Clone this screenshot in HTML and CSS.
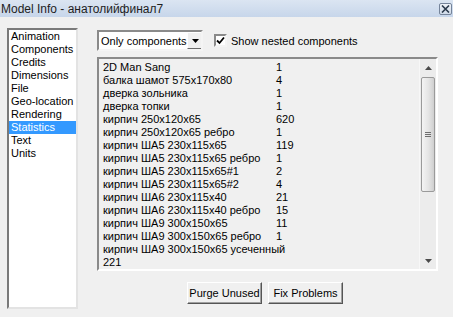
FILE: index.html
```html
<!DOCTYPE html>
<html lang="ru">
<head>
    <meta charset="UTF-8">
    <title>Model Info</title>
    <link rel="stylesheet" href="styles.css">
</head>
<body>
    <div class="titlebar">
        <span class="title">Model Info - анатолийфинал7</span>
        <span class="close-btn">
            <svg width="9" height="8" viewBox="0 0 9 8"><path d="M1 0.5 L8 7.5 M8 0.5 L1 7.5" stroke="#2b3a4d" stroke-width="1.6"/></svg>
        </span>
    </div>

    <div class="content">
        <ul class="nav">
            <li>Animation</li>
            <li>Components</li>
            <li>Credits</li>
            <li>Dimensions</li>
            <li>File</li>
            <li>Geo-location</li>
            <li>Rendering</li>
            <li class="selected">Statistics</li>
            <li>Text</li>
            <li>Units</li>
        </ul>

        <div class="main">
            <div class="toolbar">
                <div class="dropdown">
                    <span class="dropdown-text">Only components</span>
                    <span class="dropdown-arrow">
                        <svg width="7" height="4" viewBox="0 0 7 4"><path d="M0 0 H7 L3.5 4 Z" fill="#000"/></svg>
                    </span>
                </div>
                <label class="check">
                    <span class="check-box">
                        <svg width="9" height="9" viewBox="0 0 9 9"><path d="M1 4.5 L3.5 7 L8 1.5" stroke="#000" stroke-width="1.8" fill="none"/></svg>
                    </span>
                    Show nested components
                </label>
            </div>

            <div class="stats">
                <div class="rows">
                    <span>2D Man Sang</span><span>1</span>
                    <span>балка шамот 575x170x80</span><span>4</span>
                    <span>дверка зольника</span><span>1</span>
                    <span>дверка топки</span><span>1</span>
                    <span>кирпич 250x120x65</span><span>620</span>
                    <span>кирпич 250x120x65 ребро</span><span>1</span>
                    <span>кирпич ШA5 230x115x65</span><span>119</span>
                    <span>кирпич ШA5 230x115x65 ребро</span><span>1</span>
                    <span>кирпич ШA5 230x115x65#1</span><span>2</span>
                    <span>кирпич ШA5 230x115x65#2</span><span>4</span>
                    <span>кирпич ШA6 230x115x40</span><span>21</span>
                    <span>кирпич ШA6 230x115x40 ребро</span><span>15</span>
                    <span>кирпич ШA9 300x150x65</span><span>11</span>
                    <span>кирпич ШA9 300x150x65 ребро</span><span>1</span>
                    <span class="wide">кирпич ШA9 300x150x65 усеченный</span>
                    <span>221</span><span></span>
                </div>
                <div class="scrollbar">
                    <div class="sb-arrow">
                        <svg width="7" height="4" viewBox="0 0 7 4"><path d="M3.5 0 L7 4 H0 Z" fill="#4a4a4a"/></svg>
                    </div>
                    <div class="sb-thumb">
                        <span class="grip"></span>
                    </div>
                    <div class="sb-track"></div>
                    <div class="sb-arrow">
                        <svg width="7" height="4" viewBox="0 0 7 4"><path d="M0 0 H7 L3.5 4 Z" fill="#4a4a4a"/></svg>
                    </div>
                </div>
            </div>

            <div class="actions">
                <button class="btn">Purge Unused</button>
                <button class="btn">Fix Problems</button>
            </div>
        </div>
    </div>
</body>
</html>
```
FILE: styles.css
```css
body {
    margin: 0;
    background: #f0f0f0;
    font-family: "Liberation Sans", Arial, sans-serif;
    font-size: 11px;
    color: #000;
    width: 453px;
    height: 317px;
    overflow: hidden;
}

/* window title */
.titlebar {
    height: 17px;
    background: linear-gradient(to bottom, #dbe5f2, #c7d6ea);
    display: flex;
    align-items: center;
    justify-content: space-between;
}
.title { font-size: 12px; color: #1e1e1e; padding-left: 1px; }
.close-btn {
    width: 11px; height: 10px;
    margin-right: 1px;
    border: 1px solid #75849a;
    border-radius: 2px;
    background: linear-gradient(to bottom, #eef2f8, #d0dbe9);
    display: flex;
    align-items: center;
    justify-content: center;
}

.content {
    display: flex;
    padding: 11px 0 0 7px;
}

/* left list */
.nav {
    list-style: none;
    margin: 0;
    padding: 0;
    width: 67px;
    height: 277px;
    background: #fff;
    border: 2px solid;
    border-color: #7a7a7a #e3e3e3 #e3e3e3 #7a7a7a;
}
.nav li {
    line-height: 13px;
    height: 13px;
    padding-left: 2px;
    white-space: nowrap;
}
.nav li.selected { background: #3399ff; color: #fff; }

.main { margin-left: 19px; width: 341px; padding-top: 2px; }

.toolbar { display: flex; align-items: center; height: 21px; }
.dropdown {
    width: 102px; height: 17px;
    background: #fff;
    border: 2px solid;
    border-color: #8a8a8a #f4f4f4 #f4f4f4 #8a8a8a;
    display: flex;
    align-items: center;
    justify-content: space-between;
    white-space: nowrap;
    overflow: hidden;
}
.dropdown-text { padding-left: 2px; }
.dropdown-arrow {
    flex: none;
    width: 15px; height: 15px;
    background: #f0f0f0;
    border: 1px solid;
    border-color: #fff #6a6a6a #6a6a6a #fff;
    display: flex;
    align-items: center;
    justify-content: center;
}
.check { display: flex; align-items: center; margin-left: 11px; white-space: nowrap; }
.check-box {
    width: 9px; height: 9px;
    background: #fff;
    border: 2px solid;
    border-color: #8a8a8a #f4f4f4 #f4f4f4 #8a8a8a;
    margin-right: 4px;
    display: flex;
    align-items: center;
    justify-content: center;
}

/* statistics box */
.stats {
    margin-top: 6px;
    height: 210px;
    border: 2px solid;
    border-color: #8a8a8a #fff #fff #8a8a8a;
    display: flex;
}
.rows {
    flex: 1;
    display: grid;
    grid-template-columns: 173px 1fr;
    grid-auto-rows: 13px;
    line-height: 13px;
    padding: 2px 0 0 4px;
    align-content: start;
    white-space: nowrap;
}
.rows .wide { grid-column: span 2; }

.scrollbar {
    width: 16px;
    background: #ececec;
    border-left: 1px solid #f7f7f7;
    display: flex;
    flex-direction: column;
}
.sb-arrow { height: 17px; display: flex; align-items: center; justify-content: center; }
.sb-thumb {
    height: 113px;
    margin: 1px 1px 0 1px;
    border: 1px solid #9a9a9a;
    border-radius: 2px;
    background: linear-gradient(to right, #f4f4f4, #e4e4e4 55%, #cfcfcf);
    display: flex;
    align-items: center;
    justify-content: center;
}
.grip {
    width: 6px; height: 5px;
    background: repeating-linear-gradient(to bottom, #6f6f6f 0 1px, transparent 1px 2px);
}
.sb-track { flex: 1; }

.actions { display: flex; justify-content: center; gap: 6px; margin-top: 11px; padding-right: 5px; }
.btn {
    width: 75px; height: 22px;
    font-family: "Liberation Sans", Arial, sans-serif;
    font-size: 11px;
    color: #000;
    background: #f0f0f0;
    border: 1px solid;
    border-color: #fff #555 #555 #fff;
    box-shadow: inset -1px -1px 0 #a0a0a0;
    padding: 0;
    white-space: nowrap;
}
```
